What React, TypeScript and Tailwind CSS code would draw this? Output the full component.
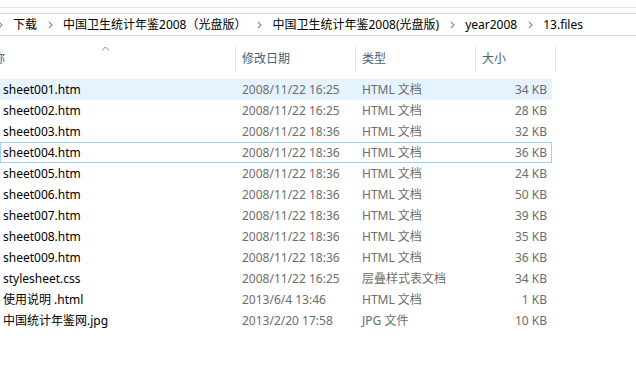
import React from 'react';

type FileRow = {
  name: string;
  date: string;
  type: string;
  size: string;
  state?: 'selected' | 'focused';
};

const files: FileRow[] = [
  { name: 'sheet001.htm', date: '2008/11/22 16:25', type: 'HTML 文档', size: '34 KB', state: 'selected' },
  { name: 'sheet002.htm', date: '2008/11/22 16:25', type: 'HTML 文档', size: '28 KB' },
  { name: 'sheet003.htm', date: '2008/11/22 18:36', type: 'HTML 文档', size: '32 KB' },
  { name: 'sheet004.htm', date: '2008/11/22 18:36', type: 'HTML 文档', size: '36 KB', state: 'focused' },
  { name: 'sheet005.htm', date: '2008/11/22 18:36', type: 'HTML 文档', size: '24 KB' },
  { name: 'sheet006.htm', date: '2008/11/22 18:36', type: 'HTML 文档', size: '50 KB' },
  { name: 'sheet007.htm', date: '2008/11/22 18:36', type: 'HTML 文档', size: '39 KB' },
  { name: 'sheet008.htm', date: '2008/11/22 18:36', type: 'HTML 文档', size: '35 KB' },
  { name: 'sheet009.htm', date: '2008/11/22 18:36', type: 'HTML 文档', size: '36 KB' },
  { name: 'stylesheet.css', date: '2008/11/22 16:25', type: '层叠样式表文档', size: '34 KB' },
  { name: '使用说明 .html', date: '2013/6/4 13:46', type: 'HTML 文档', size: '1 KB' },
  { name: '中国统计年鉴网.jpg', date: '2013/2/20 17:58', type: 'JPG 文件', size: '10 KB' },
];

const crumbs = ['下载', '中国卫生统计年鉴2008（光盘版）', '中国卫生统计年鉴2008(光盘版)', 'year2008', '13.files'];

const Chevron = () => (
  <svg width="5" height="8" viewBox="0 0 5 8" className="shrink-0">
    <path d="M1 1 L4 4 L1 7" stroke="#8a8a8a" strokeWidth="1.1" fill="none" />
  </svg>
);

export default function App() {
  return (
    <div
      className="w-[636px] h-[365px] overflow-hidden bg-white text-[12px] leading-none"
      style={{ fontFamily: '"Noto Sans", "Noto Sans CJK SC", sans-serif' }}
    >
      {/* ribbon edge */}
      <div className="h-[8px] border-b border-[#e3e3e3]" />

      {/* address bar */}
      <div className="mt-[5px] h-[23px] border-y border-[#d9d9d9] flex items-center ml-[-2px]">
        {crumbs.map((c) => (
          <div key={c} className="flex items-center">
            <Chevron />
            <span className="ml-[10px] mr-[11px] text-black whitespace-nowrap">{c}</span>
          </div>
        ))}
      </div>

      {/* column headers */}
      <div className="h-[43px] flex text-[#4c607a]">
        <div className="w-[235px] relative flex items-center pt-[3px]">
          <span className="ml-[-19px] whitespace-nowrap">名称</span>
          <svg width="9" height="5" viewBox="0 0 9 5" className="absolute left-[101px] top-[10px]">
            <path d="M1 4.5 L4.5 1 L8 4.5" stroke="#8a8a8a" strokeWidth="1" fill="none" />
          </svg>
        </div>
        <div className="w-[120px] flex">
          <div className="mt-[10px] h-[26px] w-px bg-[#e5e5e5]" />
          <div className="pl-[6px] flex items-center pt-[3px]">修改日期</div>
        </div>
        <div className="w-[120px] flex">
          <div className="mt-[10px] h-[26px] w-px bg-[#e5e5e5]" />
          <div className="pl-[6px] flex items-center pt-[3px]">类型</div>
        </div>
        <div className="w-[81px] flex">
          <div className="mt-[10px] h-[26px] w-px bg-[#e5e5e5]" />
          <div className="flex-1 pl-[6px] flex items-center pt-[3px]">大小</div>
          <div className="mt-[10px] h-[26px] w-px bg-[#e5e5e5]" />
        </div>
      </div>

      {/* rows */}
      <div className="flex flex-col">
        {files.map((f) => (
          <div
            key={f.name}
            className={
              'w-[552px] h-[21px] flex items-center border ' +
              (f.state === 'selected'
                ? 'bg-[#e5f3ff] border-[#e5f3ff]'
                : f.state === 'focused'
                ? 'border-[#99d1ff]'
                : 'border-transparent')
            }
          >
            <div className="w-[234px] pl-[2px] text-black whitespace-nowrap">{f.name}</div>
            <div className="w-[120px] pl-[7px] text-[#6d6d6d] whitespace-nowrap">{f.date}</div>
            <div className="w-[120px] pl-[7px] text-[#6d6d6d] whitespace-nowrap">{f.type}</div>
            <div className="w-[76px] pr-[4px] text-right text-[#6d6d6d] whitespace-nowrap">{f.size}</div>
          </div>
        ))}
      </div>
    </div>
  );
}
